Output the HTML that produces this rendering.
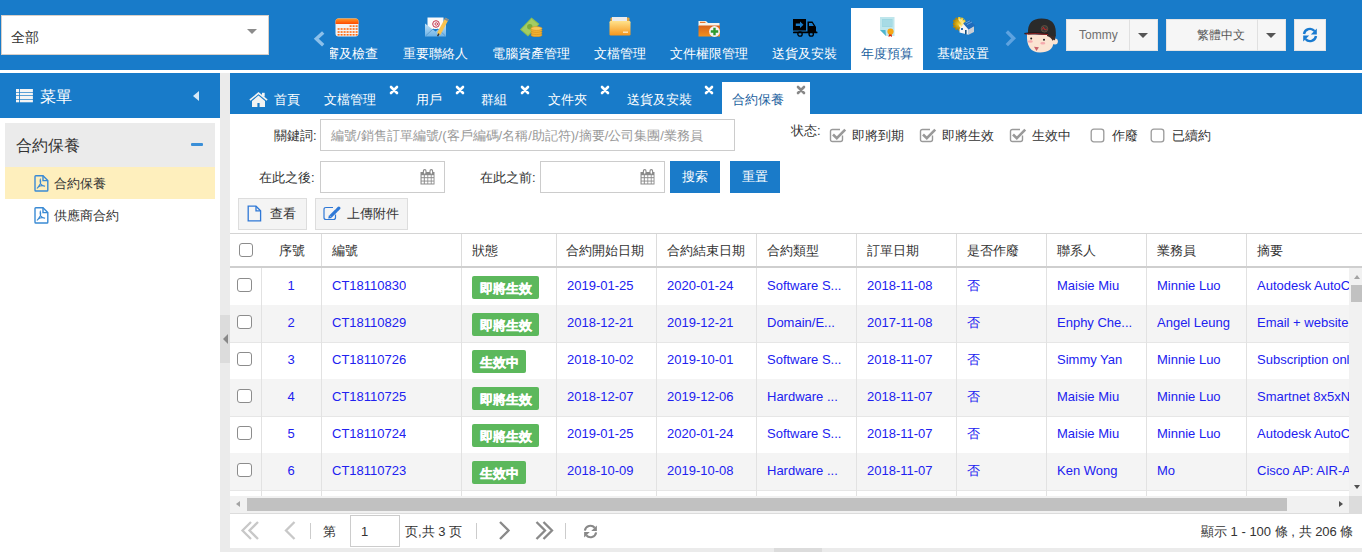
<!DOCTYPE html>
<html><head><meta charset="utf-8">
<style>
*{box-sizing:border-box;margin:0;padding:0}
html,body{width:1362px;height:552px;overflow:hidden;background:#fff;font-family:"Liberation Sans",sans-serif;font-size:13px;color:#333}
.a{position:absolute}
#top{left:0;top:0;width:1362px;height:70px;background:#187bc9}
#wline{left:0;top:70px;width:1362px;height:3px;background:#fff}
#sel{left:1px;top:15px;width:268px;height:40px;background:#fff;border:1px solid #d8cfc8}
.nav{color:#fff;font-size:13px;white-space:nowrap;line-height:14px;margin-top:1px}
.tri{width:0;height:0;border-left:5px solid transparent;border-right:5px solid transparent;border-top:5px solid #777}
.dd{background:#f6f6f6;border:1px solid #e4e4e4}
#side{left:0;top:73px;width:220px;height:479px;background:#fff}
#sideh{left:0;top:73px;width:220px;height:45px;background:#187bc9}
#strip{left:220px;top:73px;width:10px;height:479px;background:#ebebeb}
#tabbar{left:230px;top:73px;width:1132px;height:41px;background:#187bc9}
.tab{color:#fff;font-size:13px;line-height:14px;white-space:nowrap}
.x{color:#fff;font-size:12px;line-height:10px}
.lbl{font-size:13px;color:#333;line-height:14px;white-space:nowrap}
.inp{background:#fff;border:1px solid #ccc}
.btnb{background:#1a7bc9;color:#fff;font-size:13px;text-align:center;line-height:31px}
.btng{background:#f4f4f4;border:1px solid #ddd}
.cb{width:14px;height:14px;border:1.4px solid #8c8c8c;border-radius:3px;background:#fff}
.th{font-size:13px;color:#333;line-height:14px;white-space:nowrap}
.td{font-size:13px;color:#2121f0;line-height:14px;white-space:nowrap;overflow:hidden}
.badge{background:#5cb85c;color:#fff;font-weight:bold;font-size:13px;line-height:25px;height:23px;text-align:center;border-radius:2px;-webkit-text-stroke:0.35px #fff}
.vl{width:1px;background:#e2e2e2}
.hl{height:1px;background:#e6e6e6}
</style></head><body>
<div id="top" class="a"></div>
<div id="wline" class="a"></div>
<div id="sel" class="a"></div>
<div class="a" style="left:11px;top:29px;font-size:14px;color:#333;line-height:16px">全部</div>
<div class="a tri" style="left:247px;top:29px;border-top-color:#8c8c8c"></div>

<!-- nav -->
<svg class="a" style="left:313px;top:31px" width="12" height="16" viewBox="0 0 12 16"><path d="M10.2 1.4 L3.3 7.8 L10.2 14.2" stroke="#8cc0ea" stroke-width="3.4" fill="none"/></svg>
<div class="a" style="left:330px;top:40px;width:60px;height:24px;overflow:hidden"><div class="a nav" style="left:-4px;top:6px">審及檢查</div></div>
<div class="a nav" style="left:403px;top:46px">重要聯絡人</div>
<div class="a nav" style="left:492px;top:46px">電腦資產管理</div>
<div class="a nav" style="left:594px;top:46px">文檔管理</div>
<div class="a nav" style="left:670px;top:46px">文件權限管理</div>
<div class="a nav" style="left:772px;top:46px">送貨及安裝</div>
<div class="a" style="left:851px;top:8px;width:72px;height:62px;background:#fff"></div>
<div class="a nav" style="left:861px;top:46px;color:#1b5f9e">年度預算</div>
<div class="a nav" style="left:937px;top:46px">基礎設置</div>
<svg class="a" style="left:1005px;top:30px" width="12" height="17" viewBox="0 0 12 17"><path d="M1.8 1.5 L8.6 8.3 L1.8 15.1" stroke="#5ea3e0" stroke-width="3.4" fill="none"/></svg>
<!-- dropdowns -->
<div class="a dd" style="left:1066px;top:19px;width:92px;height:32px"></div>
<div class="a" style="left:1129px;top:19px;width:1px;height:32px;background:#e0e0e0"></div>
<div class="a" style="left:1079px;top:28px;font-size:12px;color:#6e6e6e;line-height:14px">Tommy</div>
<div class="a tri" style="left:1138px;top:33px;border-top-color:#555"></div>
<div class="a dd" style="left:1166px;top:19px;width:120px;height:32px"></div>
<div class="a" style="left:1257px;top:19px;width:1px;height:32px;background:#e0e0e0"></div>
<div class="a" style="left:1197px;top:28px;font-size:12px;color:#555;line-height:14px">繁體中文</div>
<div class="a tri" style="left:1266px;top:33px;border-top-color:#555"></div>
<div class="a dd" style="left:1294px;top:19px;width:32px;height:32px"></div>
<!-- sidebar -->
<div id="sideh" class="a"></div>
<div id="strip" class="a"></div>
<div class="a" style="left:220px;top:315px;width:10px;height:48px;background:#dcdcdc"></div>
<div class="a" style="left:223px;top:334px;width:0;height:0;border-top:5px solid transparent;border-bottom:5px solid transparent;border-right:5px solid #888"></div>
<div class="a" style="left:40px;top:88px;font-size:16px;color:#fff;line-height:17px">菜單</div>
<div class="a" style="left:193px;top:91px;width:0;height:0;border-top:5px solid transparent;border-bottom:5px solid transparent;border-right:6px solid #d6e8f7"></div>
<div class="a" style="left:5px;top:123px;width:210px;height:44px;background:#ebebeb"></div>
<div class="a" style="left:16px;top:137px;font-size:16px;color:#333;line-height:17px">合約保養</div>
<div class="a" style="left:191px;top:143px;width:12px;height:3px;background:#3a8fd8;border-radius:1px"></div>
<div class="a" style="left:5px;top:167px;width:210px;height:32px;background:#feefbd"></div>
<div class="a" style="left:54px;top:177px;font-size:13px;color:#333;line-height:14px">合約保養</div>
<div class="a" style="left:54px;top:209px;font-size:13px;color:#333;line-height:14px">供應商合約</div>
<!-- tabs -->
<div id="tabbar" class="a"></div>
<div class="a tab" style="left:274px;top:93px">首頁</div>
<div class="a tab" style="left:324px;top:93px">文檔管理</div>
<svg class="a" style="left:389px;top:85px" width="10" height="10" viewBox="0 0 10 10"><path d="M2 2 L8 8 M8 2 L2 8" stroke="#fff" stroke-width="2.6" stroke-linecap="round"/></svg>
<div class="a tab" style="left:416px;top:93px">用戶</div>
<svg class="a" style="left:455px;top:85px" width="10" height="10" viewBox="0 0 10 10"><path d="M2 2 L8 8 M8 2 L2 8" stroke="#fff" stroke-width="2.6" stroke-linecap="round"/></svg>
<div class="a tab" style="left:481px;top:93px">群組</div>
<svg class="a" style="left:520px;top:85px" width="10" height="10" viewBox="0 0 10 10"><path d="M2 2 L8 8 M8 2 L2 8" stroke="#fff" stroke-width="2.6" stroke-linecap="round"/></svg>
<div class="a tab" style="left:548px;top:93px">文件夾</div>
<svg class="a" style="left:600px;top:85px" width="10" height="10" viewBox="0 0 10 10"><path d="M2 2 L8 8 M8 2 L2 8" stroke="#fff" stroke-width="2.6" stroke-linecap="round"/></svg>
<div class="a tab" style="left:627px;top:93px">送貨及安裝</div>
<svg class="a" style="left:704px;top:85px" width="10" height="10" viewBox="0 0 10 10"><path d="M2 2 L8 8 M8 2 L2 8" stroke="#fff" stroke-width="2.6" stroke-linecap="round"/></svg>
<div class="a" style="left:722px;top:82px;width:88px;height:32px;background:#fff"></div>
<div class="a tab" style="left:732px;top:93px;color:#1b5f9e">合約保養</div>
<svg class="a" style="left:796px;top:85px" width="10" height="10" viewBox="0 0 10 10"><path d="M2 2 L8 8 M8 2 L2 8" stroke="#888" stroke-width="2.6" stroke-linecap="round"/></svg>

<!-- form -->
<div class="a lbl" style="left:274px;top:129px">關鍵詞:</div>
<div class="a inp" style="left:320px;top:119px;width:415px;height:32px"></div>
<div class="a lbl" style="left:331px;top:129px;color:#999">編號/銷售訂單編號/(客戶編碼/名稱/助記符)/摘要/公司集團/業務員</div>
<div class="a lbl" style="left:791px;top:124px">状态:</div>
<svg class="a" style="left:829px;top:127px" width="18" height="16" viewBox="0 0 18 16"><path d="M13.5 8.5 V12.5 Q13.5 14.5 11.5 14.5 H3.5 Q1.5 14.5 1.5 12.5 V4.5 Q1.5 2.5 3.5 2.5 H11" fill="none" stroke="#9a9a9a" stroke-width="1.4"/><path d="M4 7.5 L7.8 11.2 L16.2 2.6" fill="none" stroke="#9a9a9a" stroke-width="2.6"/></svg>
<div class="a lbl" style="left:852px;top:129px">即將到期</div>
<svg class="a" style="left:919px;top:127px" width="18" height="16" viewBox="0 0 18 16"><path d="M13.5 8.5 V12.5 Q13.5 14.5 11.5 14.5 H3.5 Q1.5 14.5 1.5 12.5 V4.5 Q1.5 2.5 3.5 2.5 H11" fill="none" stroke="#9a9a9a" stroke-width="1.4"/><path d="M4 7.5 L7.8 11.2 L16.2 2.6" fill="none" stroke="#9a9a9a" stroke-width="2.6"/></svg>
<div class="a lbl" style="left:942px;top:129px">即將生效</div>
<svg class="a" style="left:1009px;top:127px" width="18" height="16" viewBox="0 0 18 16"><path d="M13.5 8.5 V12.5 Q13.5 14.5 11.5 14.5 H3.5 Q1.5 14.5 1.5 12.5 V4.5 Q1.5 2.5 3.5 2.5 H11" fill="none" stroke="#9a9a9a" stroke-width="1.4"/><path d="M4 7.5 L7.8 11.2 L16.2 2.6" fill="none" stroke="#9a9a9a" stroke-width="2.6"/></svg>
<div class="a lbl" style="left:1032px;top:129px">生效中</div>
<svg class="a" style="left:1090px;top:127px" width="16" height="16" viewBox="0 0 16 16"><rect x="1.2" y="2.2" width="12.6" height="12.6" rx="2.6" fill="none" stroke="#9a9a9a" stroke-width="1.3"/></svg>
<div class="a lbl" style="left:1112px;top:129px">作廢</div>
<svg class="a" style="left:1150px;top:127px" width="16" height="16" viewBox="0 0 16 16"><rect x="1.2" y="2.2" width="12.6" height="12.6" rx="2.6" fill="none" stroke="#9a9a9a" stroke-width="1.3"/></svg>
<div class="a lbl" style="left:1172px;top:129px">已續約</div>
<div class="a lbl" style="left:259px;top:171px">在此之後:</div>
<div class="a inp" style="left:320px;top:161px;width:125px;height:32px"></div>
<div class="a lbl" style="left:480px;top:171px">在此之前:</div>
<div class="a inp" style="left:540px;top:161px;width:125px;height:32px"></div>
<div class="a btnb" style="left:670px;top:161px;width:50px;height:32px">搜索</div>
<div class="a btnb" style="left:730px;top:161px;width:50px;height:32px">重置</div>
<!-- toolbar -->
<div class="a btng" style="left:238px;top:198px;width:69px;height:32px"></div>
<div class="a lbl" style="left:270px;top:207px">查看</div>
<div class="a btng" style="left:315px;top:198px;width:93px;height:32px"></div>
<div class="a lbl" style="left:347px;top:207px">上傳附件</div>
<!-- table -->
<div class="a" style="left:230px;top:233px;width:1132px;height:1px;background:#d4d4d4"></div>
<div class="a" style="left:230px;top:266px;width:1132px;height:2px;background:#cfcfcf"></div>

<div class="a cb" style="left:239px;top:243px;width:14px;height:14px"></div>
<div class="a th" style="left:279px;top:244px">序號</div>
<div class="a th" style="left:332px;top:244px">編號</div>
<div class="a th" style="left:472px;top:244px">狀態</div>
<div class="a th" style="left:566px;top:244px">合約開始日期</div>
<div class="a th" style="left:667px;top:244px">合約結束日期</div>
<div class="a th" style="left:767px;top:244px">合約類型</div>
<div class="a th" style="left:867px;top:244px">訂單日期</div>
<div class="a th" style="left:967px;top:244px">是否作廢</div>
<div class="a th" style="left:1057px;top:244px">聯系人</div>
<div class="a th" style="left:1157px;top:244px">業務員</div>
<div class="a th" style="left:1257px;top:244px">摘要</div>
<div class="a vl" style="left:321px;top:234px;height:32px;background:#dcdcdc"></div>
<div class="a vl" style="left:461px;top:234px;height:32px;background:#dcdcdc"></div>
<div class="a vl" style="left:556px;top:234px;height:32px;background:#dcdcdc"></div>
<div class="a vl" style="left:656px;top:234px;height:32px;background:#dcdcdc"></div>
<div class="a vl" style="left:756px;top:234px;height:32px;background:#dcdcdc"></div>
<div class="a vl" style="left:856px;top:234px;height:32px;background:#dcdcdc"></div>
<div class="a vl" style="left:956px;top:234px;height:32px;background:#dcdcdc"></div>
<div class="a vl" style="left:1046px;top:234px;height:32px;background:#dcdcdc"></div>
<div class="a vl" style="left:1146px;top:234px;height:32px;background:#dcdcdc"></div>
<div class="a vl" style="left:1246px;top:234px;height:32px;background:#dcdcdc"></div>
<div class="a hl" style="left:230px;top:305px;width:1119px"></div>
<div class="a cb" style="left:237px;top:278px;width:15px;height:14px"></div>
<div class="a td" style="left:261px;top:279px;width:60px;text-align:center">1</div>
<div class="a td" style="left:332px;top:279px">CT18110830</div>
<div class="a badge" style="left:472px;top:276px;width:67px">即將生效</div>
<div class="a td" style="left:567px;top:279px;width:95px">2019-01-25</div>
<div class="a td" style="left:667px;top:279px;width:95px">2020-01-24</div>
<div class="a td" style="left:767px;top:279px;width:95px">Software S...</div>
<div class="a td" style="left:867px;top:279px;width:95px">2018-11-08</div>
<div class="a td" style="left:967px;top:279px;width:95px">否</div>
<div class="a td" style="left:1057px;top:279px;width:95px">Maisie Miu</div>
<div class="a td" style="left:1157px;top:279px;width:95px">Minnie Luo</div>
<div class="a td" style="left:1257px;top:279px;width:92px">Autodesk AutoCAD</div>
<div class="a" style="left:230px;top:305px;width:1119px;height:37px;background:#f4f4f4"></div>
<div class="a hl" style="left:230px;top:342px;width:1119px"></div>
<div class="a cb" style="left:237px;top:315px;width:15px;height:14px"></div>
<div class="a td" style="left:261px;top:316px;width:60px;text-align:center">2</div>
<div class="a td" style="left:332px;top:316px">CT18110829</div>
<div class="a badge" style="left:472px;top:313px;width:67px">即將生效</div>
<div class="a td" style="left:567px;top:316px;width:95px">2018-12-21</div>
<div class="a td" style="left:667px;top:316px;width:95px">2019-12-21</div>
<div class="a td" style="left:767px;top:316px;width:95px">Domain/E...</div>
<div class="a td" style="left:867px;top:316px;width:95px">2017-11-08</div>
<div class="a td" style="left:967px;top:316px;width:95px">否</div>
<div class="a td" style="left:1057px;top:316px;width:95px">Enphy Che...</div>
<div class="a td" style="left:1157px;top:316px;width:95px">Angel Leung</div>
<div class="a td" style="left:1257px;top:316px;width:92px">Email + website</div>
<div class="a hl" style="left:230px;top:379px;width:1119px"></div>
<div class="a cb" style="left:237px;top:352px;width:15px;height:14px"></div>
<div class="a td" style="left:261px;top:353px;width:60px;text-align:center">3</div>
<div class="a td" style="left:332px;top:353px">CT18110726</div>
<div class="a badge" style="left:472px;top:350px;width:54px">生效中</div>
<div class="a td" style="left:567px;top:353px;width:95px">2018-10-02</div>
<div class="a td" style="left:667px;top:353px;width:95px">2019-10-01</div>
<div class="a td" style="left:767px;top:353px;width:95px">Software S...</div>
<div class="a td" style="left:867px;top:353px;width:95px">2018-11-07</div>
<div class="a td" style="left:967px;top:353px;width:95px">否</div>
<div class="a td" style="left:1057px;top:353px;width:95px">Simmy Yan</div>
<div class="a td" style="left:1157px;top:353px;width:95px">Minnie Luo</div>
<div class="a td" style="left:1257px;top:353px;width:92px">Subscription only</div>
<div class="a" style="left:230px;top:379px;width:1119px;height:37px;background:#f4f4f4"></div>
<div class="a hl" style="left:230px;top:416px;width:1119px"></div>
<div class="a cb" style="left:237px;top:389px;width:15px;height:14px"></div>
<div class="a td" style="left:261px;top:390px;width:60px;text-align:center">4</div>
<div class="a td" style="left:332px;top:390px">CT18110725</div>
<div class="a badge" style="left:472px;top:387px;width:67px">即將生效</div>
<div class="a td" style="left:567px;top:390px;width:95px">2018-12-07</div>
<div class="a td" style="left:667px;top:390px;width:95px">2019-12-06</div>
<div class="a td" style="left:767px;top:390px;width:95px">Hardware ...</div>
<div class="a td" style="left:867px;top:390px;width:95px">2018-11-07</div>
<div class="a td" style="left:967px;top:390px;width:95px">否</div>
<div class="a td" style="left:1057px;top:390px;width:95px">Maisie Miu</div>
<div class="a td" style="left:1157px;top:390px;width:95px">Minnie Luo</div>
<div class="a td" style="left:1257px;top:390px;width:92px">Smartnet 8x5xNBD</div>
<div class="a hl" style="left:230px;top:453px;width:1119px"></div>
<div class="a cb" style="left:237px;top:426px;width:15px;height:14px"></div>
<div class="a td" style="left:261px;top:427px;width:60px;text-align:center">5</div>
<div class="a td" style="left:332px;top:427px">CT18110724</div>
<div class="a badge" style="left:472px;top:424px;width:67px">即將生效</div>
<div class="a td" style="left:567px;top:427px;width:95px">2019-01-25</div>
<div class="a td" style="left:667px;top:427px;width:95px">2020-01-24</div>
<div class="a td" style="left:767px;top:427px;width:95px">Software S...</div>
<div class="a td" style="left:867px;top:427px;width:95px">2018-11-07</div>
<div class="a td" style="left:967px;top:427px;width:95px">否</div>
<div class="a td" style="left:1057px;top:427px;width:95px">Maisie Miu</div>
<div class="a td" style="left:1157px;top:427px;width:95px">Minnie Luo</div>
<div class="a td" style="left:1257px;top:427px;width:92px">Autodesk AutoCAD</div>
<div class="a" style="left:230px;top:453px;width:1119px;height:37px;background:#f4f4f4"></div>
<div class="a hl" style="left:230px;top:490px;width:1119px"></div>
<div class="a cb" style="left:237px;top:463px;width:15px;height:14px"></div>
<div class="a td" style="left:261px;top:464px;width:60px;text-align:center">6</div>
<div class="a td" style="left:332px;top:464px">CT18110723</div>
<div class="a badge" style="left:472px;top:461px;width:54px">生效中</div>
<div class="a td" style="left:567px;top:464px;width:95px">2018-10-09</div>
<div class="a td" style="left:667px;top:464px;width:95px">2019-10-08</div>
<div class="a td" style="left:767px;top:464px;width:95px">Hardware ...</div>
<div class="a td" style="left:867px;top:464px;width:95px">2018-11-07</div>
<div class="a td" style="left:967px;top:464px;width:95px">否</div>
<div class="a td" style="left:1057px;top:464px;width:95px">Ken Wong</div>
<div class="a td" style="left:1157px;top:464px;width:95px">Mo</div>
<div class="a td" style="left:1257px;top:464px;width:92px">Cisco AP: AIR-AP</div>
<div class="a hl" style="left:230px;top:490px;width:1119px"></div>
<div class="a vl" style="left:261px;top:268px;height:228px"></div>
<div class="a vl" style="left:321px;top:268px;height:228px"></div>
<div class="a vl" style="left:461px;top:268px;height:228px"></div>
<div class="a vl" style="left:556px;top:268px;height:228px"></div>
<div class="a vl" style="left:656px;top:268px;height:228px"></div>
<div class="a vl" style="left:756px;top:268px;height:228px"></div>
<div class="a vl" style="left:856px;top:268px;height:228px"></div>
<div class="a vl" style="left:956px;top:268px;height:228px"></div>
<div class="a vl" style="left:1046px;top:268px;height:228px"></div>
<div class="a vl" style="left:1146px;top:268px;height:228px"></div>
<div class="a vl" style="left:1246px;top:268px;height:228px"></div>
<div class="a" style="left:1349px;top:268px;width:13px;height:228px;background:#f1f1f1"></div>
<div class="a" style="left:1351px;top:285px;width:11px;height:17px;background:#c1c1c1"></div>
<div class="a" style="left:230px;top:496px;width:1132px;height:17px;background:#f1f1f1"></div>
<div class="a" style="left:247px;top:498px;width:1040px;height:13px;background:#c1c1c1"></div>
<div class="a" style="left:230px;top:513px;width:1132px;height:1px;background:#dcdcdc"></div>
<div class="a" style="left:230px;top:548px;width:1132px;height:4px;background:#ebebeb"></div>
<div class="a" style="left:774px;top:548px;width:48px;height:4px;background:#dcdcdc"></div>
<div class="a lbl" style="left:323px;top:525px">第</div>
<div class="a inp" style="left:350px;top:515px;width:50px;height:32px"></div>
<div class="a lbl" style="left:361px;top:525px">1</div>
<div class="a lbl" style="left:405px;top:525px">页,共 3 页</div>
<div class="a" style="left:310px;top:523px;width:1px;height:16px;background:#ccc"></div>
<div class="a" style="left:476px;top:523px;width:1px;height:16px;background:#ccc"></div>
<div class="a" style="left:565px;top:523px;width:1px;height:16px;background:#ccc"></div>
<div class="a lbl" style="left:1201px;top:525px">顯示 1 - 100 條 , 共 206 條</div>
<!-- nav icons -->
<svg class="a" style="left:335px;top:18px" width="24" height="19" viewBox="0 0 24 19">
<defs><linearGradient id="cg" x1="0" y1="0" x2="0" y2="1"><stop offset="0" stop-color="#ff9a2a"/><stop offset="1" stop-color="#ff4a00"/></linearGradient></defs>
<rect x="0.5" y="0.5" width="23" height="18" rx="3" fill="#f4f4f4"/>
<path d="M0.5 3.5 a3 3 0 0 1 3 -3 h17 a3 3 0 0 1 3 3 v2.5 h-23z" fill="url(#cg)"/>
<g fill="#ff6a10">
<rect x="14.6" y="7.3" width="2" height="1.6"/><rect x="17.6" y="7.3" width="2" height="1.6"/><rect x="20.6" y="7.3" width="2" height="1.6"/>
<rect x="2.6" y="10.2" width="2" height="1.6"/><rect x="5.6" y="10.2" width="2" height="1.6"/><rect x="8.6" y="10.2" width="2" height="1.6"/><rect x="11.6" y="10.2" width="2" height="1.6"/><rect x="14.6" y="10.2" width="2" height="1.6"/><rect x="17.6" y="10.2" width="2" height="1.6"/><rect x="20.6" y="10.2" width="2" height="1.6"/>
<rect x="2.6" y="13.2" width="2" height="1.6"/><rect x="5.6" y="13.2" width="2" height="1.6"/><rect x="8.6" y="13.2" width="2" height="1.6"/><rect x="11.6" y="13.2" width="2" height="1.6"/><rect x="14.6" y="13.2" width="2" height="1.6"/><rect x="17.6" y="13.2" width="2" height="1.6"/><rect x="20.6" y="13.2" width="2" height="1.6"/>
<rect x="2.6" y="16" width="2" height="1.6"/><rect x="5.6" y="16" width="2" height="1.6"/><rect x="8.6" y="16" width="2" height="1.6"/><rect x="11.6" y="16" width="2" height="1.6"/><rect x="14.6" y="16" width="2" height="1.6"/><rect x="17.6" y="16" width="2" height="1.6"/><rect x="20.6" y="16" width="2" height="1.6"/>
</g></svg>
<svg class="a" style="left:425px;top:17px" width="24" height="20" viewBox="0 0 24 20">
<defs><linearGradient id="eg" x1="0" y1="0" x2="0" y2="1"><stop offset="0" stop-color="#bfe0f6"/><stop offset="1" stop-color="#6fb3e6"/></linearGradient></defs>
<path d="M2.5 0.5 H18.5 V12 H2.5Z" fill="#fafafa"/>
<path d="M0 6.5 L10.5 14.5 L21 6.5 V19.5 H0Z" fill="url(#eg)"/>
<path d="M0.5 19 L8.5 11.5 M20.5 19 L12.5 11.5" stroke="#4d8fc4" stroke-width="0.7"/>
<circle cx="11" cy="7" r="3.3" fill="none" stroke="#c4314b" stroke-width="1"/>
<circle cx="11.3" cy="7" r="1.3" fill="none" stroke="#c4314b" stroke-width="0.9"/>
<path d="M22 1.6 L13.6 17.2" stroke="#f8c24e" stroke-width="3.8"/>
<path d="M22 1.6 L21 3.4" stroke="#8a8a8a" stroke-width="3.8"/>
<path d="M13.9 16.6 L12.6 19.2" stroke="#333" stroke-width="1.4"/>
</svg>
<svg class="a" style="left:520px;top:17px" width="23" height="20" viewBox="0 0 23 20">
<path d="M0 12.5 L11.5 0.5 L19.5 7 L8 19.5Z" fill="#8dbf4f"/>
<path d="M1.5 12.5 L11.5 2 L18 7.2 L8 18Z" fill="#a3cc63"/>
<circle cx="9.8" cy="9.8" r="2.7" fill="#7aaa3c"/>
<g fill="#f2b233" stroke="#d98e1a" stroke-width="0.6">
<ellipse cx="16.5" cy="18" rx="5.6" ry="1.8"/><ellipse cx="16.5" cy="15.8" rx="5.6" ry="1.8"/><ellipse cx="16.5" cy="13.6" rx="5.6" ry="1.8"/><ellipse cx="16.5" cy="11.5" rx="5.6" ry="1.9" fill="#f7c857"/>
</g></svg>
<svg class="a" style="left:609px;top:17px" width="22" height="19" viewBox="0 0 22 19">
<defs><linearGradient id="fg" x1="0" y1="0" x2="0" y2="1"><stop offset="0" stop-color="#ffe28c"/><stop offset="1" stop-color="#f6951a"/></linearGradient></defs>
<rect x="1.5" y="0.5" width="19" height="6" rx="1" fill="#e8a33a"/>
<rect x="3" y="0" width="15" height="4" fill="#ebebeb"/>
<rect x="0.5" y="4" width="21" height="14.5" rx="1.2" fill="url(#fg)"/>
<rect x="14" y="14.5" width="5" height="1.4" fill="#fde7c0"/>
</svg>
<svg class="a" style="left:698px;top:20px" width="23" height="17" viewBox="0 0 23 17">
<defs><linearGradient id="og" x1="0" y1="0" x2="0" y2="1"><stop offset="0" stop-color="#d9631e"/><stop offset="1" stop-color="#f5901c"/></linearGradient></defs>
<path d="M0.5 1 H8 L10 3 H21.5 V6 H0.5Z" fill="#f6f2ea"/>
<rect x="2" y="1.8" width="5.5" height="1.2" fill="#e8742a"/>
<rect x="0.5" y="5.5" width="21.5" height="11" fill="url(#og)"/>
<circle cx="16.5" cy="11.5" r="5.4" fill="#f3f3f3"/>
<path d="M16.5 7.8 V15.2 M12.8 11.5 H20.2" stroke="#2e9a2e" stroke-width="2.4"/>
</svg>
<svg class="a" style="left:793px;top:19px" width="25" height="18" viewBox="0 0 25 18">
<rect x="0" y="0" width="13" height="11.5" fill="#000"/>
<path d="M2.8 4.5 H7 V2.5 L10.5 5.8 L7 9 V7 H2.8Z" fill="#187bc9"/>
<path d="M14.5 2.5 H19.5 L23 8 V13.5 H14.5Z" fill="#000"/>
<path d="M16 4 H19 L20.8 7 H16Z" fill="#187bc9"/>
<rect x="0" y="12.5" width="24.5" height="1.8" rx="0.9" fill="#000"/>
<circle cx="7" cy="15" r="2.2" fill="none" stroke="#000" stroke-width="1.3"/>
<circle cx="18.2" cy="15" r="2.2" fill="none" stroke="#000" stroke-width="1.3"/>
</svg>
<svg class="a" style="left:880px;top:17px" width="15" height="20" viewBox="0 0 15 20">
<path d="M0 0 H14.5 V19 H6 L0 13Z" fill="#bfe6ec"/>
<rect x="2" y="2" width="10.5" height="8" fill="#9ed7e2"/>
<path d="M2.5 4 H12 M2.5 6 H12 M2.5 8 H12" stroke="#b8e3eb" stroke-width="0.7"/>
<path d="M0 13 H5.5 L6 19Z" fill="#4fb6cf"/>
<path d="M9.2 16 L8.5 20 L10.3 19 L12 20 L11.5 16Z" fill="#d8260a"/>
<circle cx="10.5" cy="14.5" r="3.1" fill="#f6a613"/>
</svg>
<svg class="a" style="left:953px;top:16px" width="23" height="20" viewBox="0 0 23 20">
<defs><radialGradient id="gg" gradientUnits="userSpaceOnUse" cx="1" cy="-3" r="9"><stop offset="0" stop-color="#fffbe0"/><stop offset="0.35" stop-color="#f3cc2a"/><stop offset="1" stop-color="#b08304"/></radialGradient></defs>
<g fill="url(#gg)" transform="translate(6.3 7.8)"><circle r="5"/><rect x="-1.2" y="-6.8" width="2.4" height="13.6"/><rect x="-1.2" y="-6.8" width="2.4" height="13.6" transform="rotate(30)"/><rect x="-1.2" y="-6.8" width="2.4" height="13.6" transform="rotate(60)"/><rect x="-1.2" y="-6.8" width="2.4" height="13.6" transform="rotate(90)"/><rect x="-1.2" y="-6.8" width="2.4" height="13.6" transform="rotate(120)"/><rect x="-1.2" y="-6.8" width="2.4" height="13.6" transform="rotate(150)"/></g>
<path d="M15.5 12.8 L21 10 V16 L15.5 18.8Z" fill="#c9ced4"/>
<path d="M6.5 13 L11 7.8 L15.5 12.8 V18.8 L6.5 16.5Z" fill="#f4f4f4"/>
<path d="M10.2 7.5 L16.5 3.8 L22.3 9.6 L15.5 13.4Z" fill="#1f6cbc"/>
<path d="M12.5 7 L17 4.8 M14 8.6 L19 6" stroke="#7db8ea" stroke-width="0.7"/>
<rect x="8" y="12" width="2" height="2" fill="#2a70b8"/>
<rect x="12" y="14" width="1.6" height="4.3" fill="#14507f"/>
</svg>
<!-- avatar -->
<svg class="a" style="left:1024px;top:18px" width="35" height="35" viewBox="0 0 35 35">
<path d="M3 16 Q2 34.5 16 34.5 Q28.5 34.5 29.8 24 L30 17 Z" fill="#fbe4d2"/>
<circle cx="31" cy="23.5" r="2.9" fill="#fbe4d2"/>
<path d="M23 16.5 L31.5 17 L31 22.5 Q29.5 21 28.8 23 Q27 19 23 18Z" fill="#3d2a24"/>
<path d="M4 15 Q3.5 0.6 17.5 0.6 Q31.5 0.6 31.8 14 L31.8 18.5 Q18 15.5 4 16.5 Z" fill="#2a2a2a"/>
<path d="M0.2 15 Q12 12.8 24 15 L24 16.8 Q12 15.6 0.6 16.2 Z" fill="#1e1e1e"/>
<path d="M1.5 16 Q12 15 24 16.6" stroke="#a82020" stroke-width="0.9" fill="none"/>
<circle cx="20.5" cy="10.8" r="3.3" fill="#3a3a3a" stroke="#7a6245" stroke-width="0.6"/>
<path d="M18.3 11.5 L19.5 9.3 L21 12 L22.8 11" stroke="#d42424" stroke-width="0.9" fill="none"/>
<circle cx="7.2" cy="20.6" r="1" fill="#222"/><circle cx="20" cy="21.8" r="1" fill="#222"/>
<ellipse cx="6.3" cy="23.5" rx="2.5" ry="1.3" fill="#f6a9ad"/><ellipse cx="18.8" cy="25.3" rx="2.5" ry="1.3" fill="#f6a9ad"/>
<path d="M10 28.7 L14.9 29.2 L12.5 33 Z" fill="#c9636b"/>
</svg>
<!-- refresh top -->
<svg class="a" style="left:1302px;top:27px" width="16" height="16" viewBox="0 0 16 16">
<path d="M2 7 A6 6 0 0 1 12.5 4" stroke="#1a7bd0" stroke-width="2.4" fill="none"/>
<path d="M14.8 1.5 V7.5 H8.8Z" fill="#1a7bd0"/>
<path d="M14 9 A6 6 0 0 1 3.5 12" stroke="#1a7bd0" stroke-width="2.4" fill="none"/>
<path d="M1.2 14.5 V8.5 H7.2Z" fill="#1a7bd0"/>
</svg>
<!-- sidebar icons -->
<svg class="a" style="left:16px;top:89px" width="17" height="14" viewBox="0 0 17 14">
<g fill="#f4f4f4"><rect x="0" y="0" width="3.1" height="3"/><rect x="3.9" y="0" width="13" height="3"/>
<rect x="0" y="3.7" width="3.1" height="2.6"/><rect x="3.9" y="3.7" width="13" height="2.6"/>
<rect x="0" y="7" width="3.1" height="3"/><rect x="3.9" y="7" width="13" height="3"/>
<rect x="0" y="10.7" width="3.1" height="2.6"/><rect x="3.9" y="10.7" width="13" height="2.6"/></g>
</svg>
<svg class="a" style="left:34px;top:175px" width="15" height="17" viewBox="0 0 15 17">
<path d="M1 1.6 Q1 0.8 1.8 0.8 H9 L13.8 5.6 V15.2 Q13.8 16 13 16 H1.8 Q1 16 1 15.2Z" fill="none" stroke="#3a8ad4" stroke-width="1.4"/>
<path d="M9 0.8 V5.6 H13.8" fill="none" stroke="#3a8ad4" stroke-width="1.4"/>
<path d="M3 13.5 Q5 11 6.5 8.5 Q7 6 6.3 4.5 Q5.8 6 6.6 8.8 Q8 11 11 11.3 Q9 10.2 6 11 Q4 11.8 3 13.5" fill="none" stroke="#3a8ad4" stroke-width="1.1"/>
</svg>
<svg class="a" style="left:34px;top:207px" width="15" height="17" viewBox="0 0 15 17">
<path d="M1 1.6 Q1 0.8 1.8 0.8 H9 L13.8 5.6 V15.2 Q13.8 16 13 16 H1.8 Q1 16 1 15.2Z" fill="none" stroke="#3a8ad4" stroke-width="1.4"/>
<path d="M9 0.8 V5.6 H13.8" fill="none" stroke="#3a8ad4" stroke-width="1.4"/>
<path d="M3 13.5 Q5 11 6.5 8.5 Q7 6 6.3 4.5 Q5.8 6 6.6 8.8 Q8 11 11 11.3 Q9 10.2 6 11 Q4 11.8 3 13.5" fill="none" stroke="#3a8ad4" stroke-width="1.1"/>
</svg>
<!-- home icon -->
<svg class="a" style="left:249px;top:92px" width="19" height="15" viewBox="0 0 19 15">
<path d="M3 9 L9.5 3.6 L16 9 V15 H10.6 V10.9 H8.4 V15 H3 Z" fill="#f2f2f2"/>
<path d="M0.9 8.2 L9.5 1.2 L18.1 8.2" stroke="#f2f2f2" stroke-width="1.7" fill="none"/>
<rect x="13" y="0.8" width="2.7" height="3.8" fill="#f2f2f2"/>
</svg>
<!-- calendar small -->
<svg class="a" style="left:420px;top:169px" width="16" height="16" viewBox="0 0 16 16">
<path d="M0.5 3 H14.5 V15.5 H0.5Z" fill="#8a8a8a"/>
<g fill="#fff"><rect x="1.6" y="6.2" width="2.2" height="2"/><rect x="4.8" y="6.2" width="2.6" height="2"/><rect x="8.2" y="6.2" width="2.6" height="2"/><rect x="11.6" y="6.2" width="2" height="2"/>
<rect x="1.6" y="9.2" width="2.2" height="2.4"/><rect x="4.8" y="9.2" width="2.6" height="2.4"/><rect x="8.2" y="9.2" width="2.6" height="2.4"/><rect x="11.6" y="9.2" width="2" height="2.4"/>
<rect x="1.6" y="12.5" width="2.2" height="2"/><rect x="4.8" y="12.5" width="2.6" height="2"/><rect x="8.2" y="12.5" width="2.6" height="2"/><rect x="11.6" y="12.5" width="2" height="2"/></g>
<rect x="3.4" y="0.6" width="2.6" height="4.6" rx="1.3" fill="#fff" stroke="#8a8a8a" stroke-width="1.1"/><rect x="10" y="0.6" width="2.6" height="4.6" rx="1.3" fill="#fff" stroke="#8a8a8a" stroke-width="1.1"/>
</svg>
<svg class="a" style="left:640px;top:169px" width="16" height="16" viewBox="0 0 16 16">
<path d="M0.5 3 H14.5 V15.5 H0.5Z" fill="#8a8a8a"/>
<g fill="#fff"><rect x="1.6" y="6.2" width="2.2" height="2"/><rect x="4.8" y="6.2" width="2.6" height="2"/><rect x="8.2" y="6.2" width="2.6" height="2"/><rect x="11.6" y="6.2" width="2" height="2"/>
<rect x="1.6" y="9.2" width="2.2" height="2.4"/><rect x="4.8" y="9.2" width="2.6" height="2.4"/><rect x="8.2" y="9.2" width="2.6" height="2.4"/><rect x="11.6" y="9.2" width="2" height="2.4"/>
<rect x="1.6" y="12.5" width="2.2" height="2"/><rect x="4.8" y="12.5" width="2.6" height="2"/><rect x="8.2" y="12.5" width="2.6" height="2"/><rect x="11.6" y="12.5" width="2" height="2"/></g>
<rect x="3.4" y="0.6" width="2.6" height="4.6" rx="1.3" fill="#fff" stroke="#8a8a8a" stroke-width="1.1"/><rect x="10" y="0.6" width="2.6" height="4.6" rx="1.3" fill="#fff" stroke="#8a8a8a" stroke-width="1.1"/>
</svg>
<!-- toolbar icons -->
<svg class="a" style="left:247px;top:205px" width="15" height="17" viewBox="0 0 15 17">
<path d="M1.2 1.2 H9 L13.6 5.8 V15.8 H1.2Z" fill="none" stroke="#2f78d6" stroke-width="1.3"/>
<path d="M9 1.2 V5.8 H13.6" fill="none" stroke="#2f78d6" stroke-width="1.3"/>
</svg>
<svg class="a" style="left:323px;top:206px" width="18" height="15" viewBox="0 0 18 15">
<path d="M10 1.5 H3 Q1 1.5 1 3.5 V11.5 Q1 13.5 3 13.5 H10.5 Q12.5 13.5 12.5 11.5 V8.5" fill="none" stroke="#2f78d6" stroke-width="1.2"/>
<path d="M7.6 10.4 L13.6 4.4" stroke="#2f78d6" stroke-width="3.2"/>
<path d="M14.4 3.6 L15.8 2.2" stroke="#2f78d6" stroke-width="3.2" stroke-linecap="round"/>
<path d="M5.2 12.6 L6 9 L9 12Z" fill="#2f78d6"/>
</svg>
<!-- pagination icons -->
<svg class="a" style="left:240px;top:521px" width="20" height="19" viewBox="0 0 20 19">
<path d="M11 1 L2.5 9.5 L11 18 M18 1 L9.5 9.5 L18 18" stroke="#c8c8c8" stroke-width="2.3" fill="none"/>
</svg>
<svg class="a" style="left:283px;top:521px" width="14" height="19" viewBox="0 0 14 19">
<path d="M11.5 1 L3 9.5 L11.5 18" stroke="#c8c8c8" stroke-width="2.3" fill="none"/>
</svg>
<svg class="a" style="left:498px;top:521px" width="14" height="19" viewBox="0 0 14 19">
<path d="M2 1 L10.5 9.5 L2 18" stroke="#8a8a8a" stroke-width="2.3" fill="none"/>
</svg>
<svg class="a" style="left:535px;top:521px" width="20" height="19" viewBox="0 0 20 19">
<path d="M1.5 1 L10 9.5 L1.5 18 M8.5 1 L17 9.5 L8.5 18" stroke="#8a8a8a" stroke-width="2.3" fill="none"/>
</svg>
<svg class="a" style="left:583px;top:524px" width="15" height="15" viewBox="0 0 16 16">
<path d="M2 7 A6 6 0 0 1 12.5 4" stroke="#888" stroke-width="2.2" fill="none"/>
<path d="M14.8 1.5 V7.5 H8.8Z" fill="#888"/>
<path d="M14 9 A6 6 0 0 1 3.5 12" stroke="#888" stroke-width="2.2" fill="none"/>
<path d="M1.2 14.5 V8.5 H7.2Z" fill="#888"/>
</svg>

<!-- scrollbar arrows -->
<div class="a" style="left:1349px;top:496px;width:13px;height:17px;background:#dcdcdc"></div>
<div class="a" style="left:1354px;top:275px;width:0;height:0;border-left:3.5px solid transparent;border-right:3.5px solid transparent;border-bottom:4px solid #a3a3a3"></div>
<div class="a" style="left:1354px;top:485px;width:0;height:0;border-left:3.5px solid transparent;border-right:3.5px solid transparent;border-top:4px solid #505050"></div>
<div class="a" style="left:236px;top:501px;width:0;height:0;border-top:3.5px solid transparent;border-bottom:3.5px solid transparent;border-right:4px solid #a3a3a3"></div>
<div class="a" style="left:1339px;top:501px;width:0;height:0;border-top:3.5px solid transparent;border-bottom:3.5px solid transparent;border-left:4px solid #505050"></div>

</body></html>
